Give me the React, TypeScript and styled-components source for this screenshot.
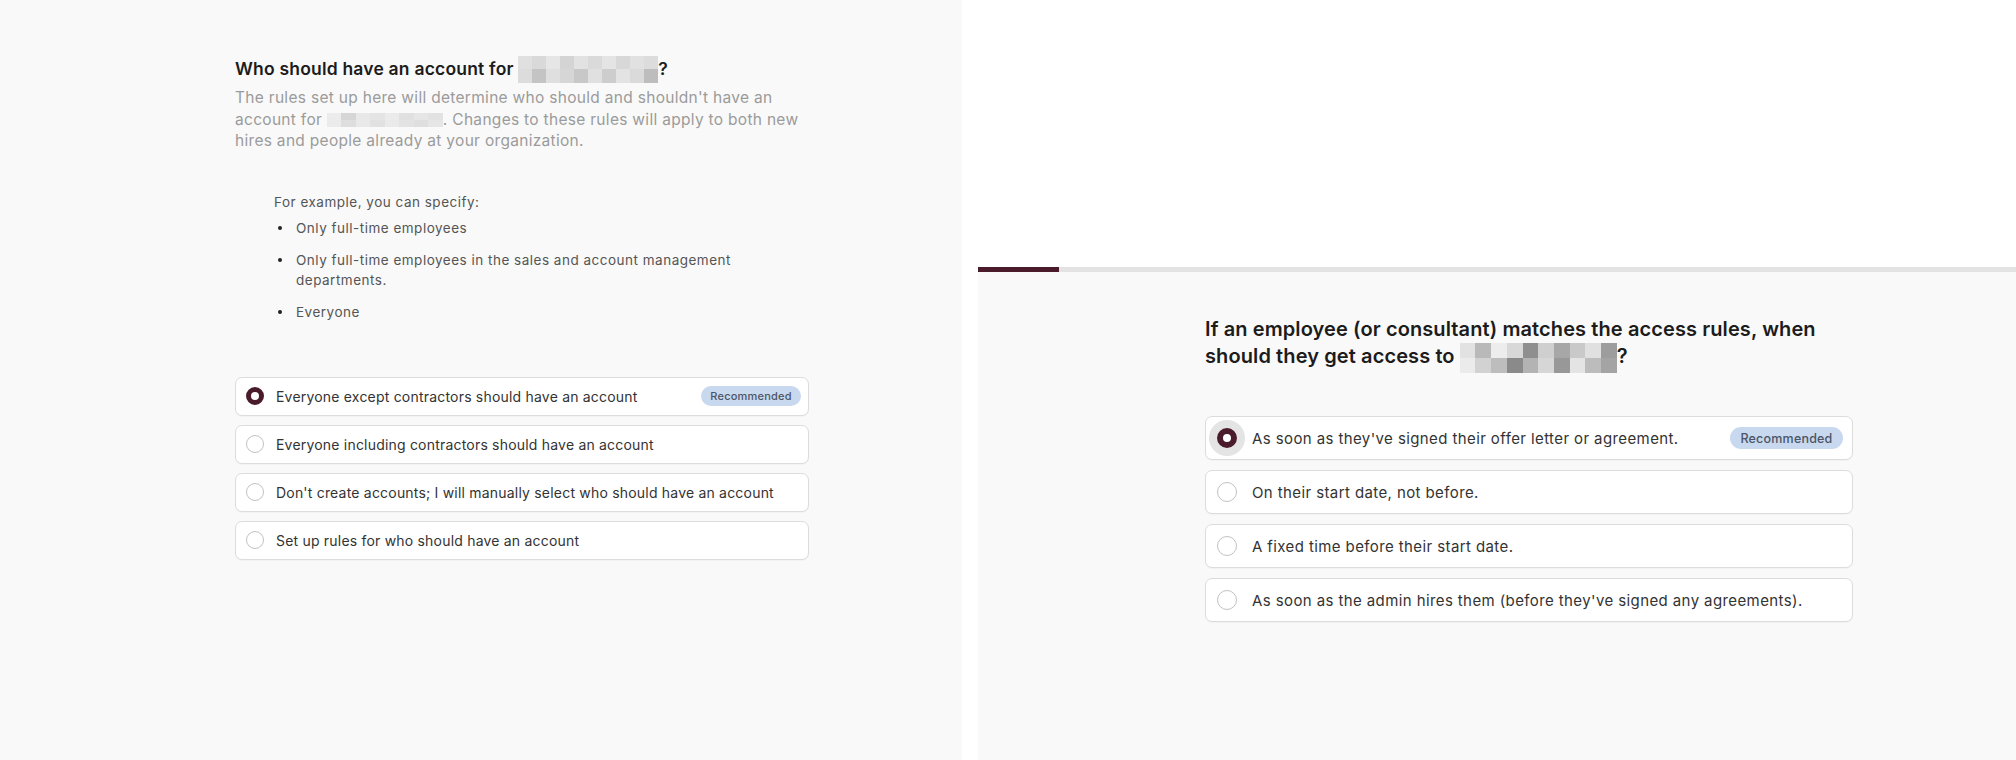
import React from 'react';
import styled, { createGlobalStyle } from 'styled-components';

const GlobalStyle = createGlobalStyle`
  html, body { margin: 0; padding: 0; background: #ffffff; }
  body { font-family: Inter, "Noto Sans", "Liberation Sans", sans-serif; }
  * { box-sizing: border-box; }
`;

const Page = styled.div`
  display: grid;
  grid-template-columns: 962px 1fr;
  column-gap: 16px;
  width: 2016px;
  height: 760px;
  overflow: hidden;
  background: #ffffff;
`;

const LeftPanel = styled.section`
  background: #f9f9f9;
  padding: 58px 0 0 235px;
`;

const Column = styled.div<{ $width: number }>`
  width: ${(p) => p.$width}px;
  display: flex;
  flex-direction: column;
`;

const RightPanel = styled.section`
  display: flex;
  flex-direction: column;
`;

const TopBlank = styled.div`
  height: 267px;
  background: #ffffff;
`;

const Progress = styled.div`
  height: 5px;
  background: #e3e3e3;
  display: flex;
`;

const ProgressFill = styled.div`
  height: 100%;
  background: #4a1c2b;
`;

const RightBody = styled.div`
  flex: 1;
  background: #f9f9f9;
  padding: 44px 0 0 227px;
`;

const Title = styled.h2<{ $size: number; $lh: number; $ls: number }>`
  margin: 0;
  font-size: ${(p) => p.$size}px;
  line-height: ${(p) => p.$lh}px;
  font-weight: 600;
  color: #1c1c1c;
  letter-spacing: ${(p) => p.$ls}px;
`;

const Lead = styled.p`
  margin: 7px 0 0;
  font-size: 15.5px;
  line-height: 21.5px;
  letter-spacing: 0.3px;
  color: #9b9b9b;
`;

const Example = styled.div`
  margin-top: 40px;
  padding-left: 39px;
  font-size: 13.5px;
  line-height: 20px;
  letter-spacing: 0.5px;
  color: #555555;
`;

const BulletList = styled.ul`
  list-style: none;
  margin: 6px 0 0;
  padding: 0;
  display: flex;
  flex-direction: column;
  gap: 12px;
  width: 520px;
`;

const BulletItem = styled.li`
  display: flex;
  align-items: flex-start;
`;

const Dot = styled.span`
  flex: none;
  width: 4px;
  height: 4px;
  margin: 8px 14px 0 4px;
  border-radius: 50%;
  background: #222222;
`;

const Options = styled.div<{ $top: number; $gap: number }>`
  margin-top: ${(p) => p.$top}px;
  display: flex;
  flex-direction: column;
  gap: ${(p) => p.$gap}px;
`;

const Option = styled.label<{ $height: number; $padL: number; $padR: number; $gap: number; $size: number; $ls: number }>`
  display: flex;
  align-items: center;
  height: ${(p) => p.$height}px;
  padding: 0 ${(p) => p.$padR}px 0 ${(p) => p.$padL}px;
  gap: ${(p) => p.$gap}px;
  background: #ffffff;
  border: 1px solid #dcdcdc;
  border-radius: 7px;
  box-shadow: 0 1px 1px rgba(0, 0, 0, 0.03);
  font-size: ${(p) => p.$size}px;
  letter-spacing: ${(p) => p.$ls}px;
  color: #333333;
  cursor: pointer;
`;

const OptionText = styled.span`
  flex: 1;
  white-space: nowrap;
`;

const Radio = styled.span<{ $checked: boolean; $size: number; $halo: boolean }>`
  flex: none;
  width: ${(p) => p.$size}px;
  height: ${(p) => p.$size}px;
  border-radius: 50%;
  background: #ffffff;
  border: ${(p) => (p.$checked ? `${Math.round(p.$size * 0.3)}px solid #4a1c2b` : '1.5px solid #c2c2c2')};
  box-shadow: ${(p) => (p.$halo ? '0 0 0 8px #e4e4e4' : 'none')};
`;

const Badge = styled.span<{ $w: number; $h: number; $size: number }>`
  flex: none;
  display: inline-flex;
  align-items: center;
  justify-content: center;
  width: ${(p) => p.$w}px;
  height: ${(p) => p.$h}px;
  border-radius: ${(p) => p.$h / 2}px;
  background: #c8d8ef;
  color: #4b5565;
  font-size: ${(p) => p.$size}px;
  font-weight: 500;
  letter-spacing: 0.2px;
`;

const Redacted = styled.span<{ $w: number; $h: number; $cols: number; $shift: number }>`
  display: inline-grid;
  grid-template-columns: repeat(${(p) => p.$cols}, 1fr);
  grid-template-rows: repeat(2, 1fr);
  width: ${(p) => p.$w}px;
  height: ${(p) => p.$h}px;
  vertical-align: middle;
  margin: -${(p) => p.$h}px 0;
  position: relative;
  top: ${(p) => p.$shift}px;
  filter: blur(0.6px);
`;

const Cell = styled.span<{ $c: string }>`
  background: ${(p) => p.$c};
`;

function Blur({ w, h, cells, shift }: { w: number; h: number; cells: string[]; shift: number }) {
  const cols = cells.length / 2;
  return (
    <Redacted $w={w} $h={h} $cols={cols} $shift={shift}>
      {cells.map((c, i) => (
        <Cell key={i} $c={c} />
      ))}
    </Redacted>
  );
}

const headBlur = [
  '#e0e0e0', '#d9d9d9', '#e6e6e6', '#d4d4d4', '#e2e2e2', '#dadada', '#e4e4e4', '#d8d8d8', '#e1e1e1', '#dcdcdc',
  '#dcdcdc', '#c4c4c4', '#dfdfdf', '#d6d6d6', '#c8c8c8', '#e0e0e0', '#cdcdcd', '#e3e3e3', '#dadada', '#bdbdbd',
];
const leadBlur = [
  '#ececec', '#d6d6d6', '#e8e8e8', '#e4e4e4', '#ebebeb', '#e0e0e0', '#e6e6e6', '#e2e2e2',
  '#ebebeb', '#dedede', '#e9e9e9', '#e1e1e1', '#eaeaea', '#e3e3e3', '#dfdfdf', '#e6e6e6',
];
const rightBlur = [
  '#e2e2e2', '#b9b9b9', '#ededed', '#d8d8d8', '#8f8f8f', '#cfcfcf', '#a7a7a7', '#c9c9c9', '#e0e0e0', '#9d9d9d',
  '#ebebeb', '#d2d2d2', '#bdbdbd', '#8a8a8a', '#b3b3b3', '#d6d6d6', '#989898', '#e4e4e4', '#bcbcbc', '#a4a4a4',
];

const leftOptions = [
  'Everyone except contractors should have an account',
  'Everyone including contractors should have an account',
  "Don't create accounts; I will manually select who should have an account",
  'Set up rules for who should have an account',
];

const rightOptions = [
  "As soon as they've signed their offer letter or agreement.",
  'On their start date, not before.',
  'A fixed time before their start date.',
  "As soon as the admin hires them (before they've signed any agreements).",
];

export default function App() {
  const progress = 81 / 1038;
  return (
    <>
      <GlobalStyle />
      <Page>
        <LeftPanel>
          <Column $width={574}>
            <Title $size={17.5} $lh={22} $ls={0.2}>
              Who should have an account for <Blur w={140} h={27} cells={headBlur} shift={-1} />?
            </Title>
            <Lead>
              The rules set up here will determine who should and shouldn't have an account for{' '}
              <Blur w={116} h={14} cells={leadBlur} shift={0} />. Changes to these rules will apply to both new
              hires and people already at your organization.
            </Lead>
            <Example>
              For example, you can specify:
              <BulletList>
                <BulletItem>
                  <Dot />
                  Only full-time employees
                </BulletItem>
                <BulletItem>
                  <Dot />
                  Only full-time employees in the sales and account management departments.
                </BulletItem>
                <BulletItem>
                  <Dot />
                  Everyone
                </BulletItem>
              </BulletList>
            </Example>
            <Options $top={55} $gap={9}>
              {leftOptions.map((t, i) => (
                <Option key={t} $height={39} $padL={10} $padR={7} $gap={12} $size={14} $ls={0.2}>
                  <Radio $checked={i === 0} $size={18} $halo={false} />
                  <OptionText>{t}</OptionText>
                  {i === 0 && (
                    <Badge $w={100} $h={20} $size={11}>
                      Recommended
                    </Badge>
                  )}
                </Option>
              ))}
            </Options>
          </Column>
        </LeftPanel>
        <RightPanel>
          <TopBlank />
          <Progress>
            <ProgressFill style={{ width: `${progress * 100}%` }} />
          </Progress>
          <RightBody>
            <Column $width={648}>
              <Title $size={20} $lh={27} $ls={0.1}>
                If an employee (or consultant) matches the access rules, when should they get access to{' '}
                <Blur w={157} h={30} cells={rightBlur} shift={0} />?
              </Title>
              <Options $top={46} $gap={10}>
                {rightOptions.map((t, i) => (
                  <Option key={t} $height={44} $padL={11} $padR={9} $gap={15} $size={15} $ls={0.4}>
                    <Radio $checked={i === 0} $size={20} $halo={i === 0} />
                    <OptionText>{t}</OptionText>
                    {i === 0 && (
                      <Badge $w={113} $h={22} $size={12.5}>
                        Recommended
                      </Badge>
                    )}
                  </Option>
                ))}
              </Options>
            </Column>
          </RightBody>
        </RightPanel>
      </Page>
    </>
  );
}
